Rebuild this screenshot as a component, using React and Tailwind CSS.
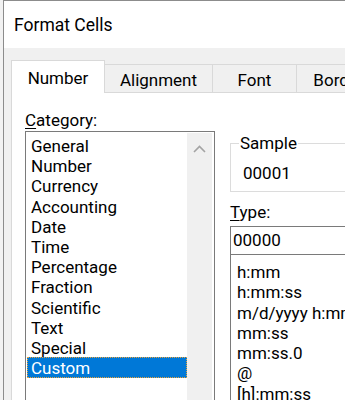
import React from "react";

const categories = [
  "General",
  "Number",
  "Currency",
  "Accounting",
  "Date",
  "Time",
  "Percentage",
  "Fraction",
  "Scientific",
  "Text",
  "Special",
  "Custom",
];

const types = ["h:mm", "h:mm:ss", "m/d/yyyy h:mm", "mm:ss", "mm:ss.0", "@", "[h]:mm:ss"];

const tabs = [
  { name: "Alignment", w: "w-[108px]" },
  { name: "Font", w: "w-[84px]" },
  { name: "Border", w: "w-[84px]" },
];

const App = () => {
  return (
    <div
      className="w-[345px] h-[400px] overflow-hidden bg-[#f2f2f2] text-black"
      style={{ fontFamily: 'Roboto, "Noto Sans", sans-serif' }}
    >
      <div className="ml-[3px] w-[520px] h-[400px] border-l border-t border-[#8c8c8c] flex flex-col overflow-hidden">
        {/* title bar */}
        <div className="shrink-0 h-[47px] bg-white flex items-center pl-[10px] pt-[2px]">
          <span className="text-[17.5px] leading-none">Format Cells</span>
        </div>

        <div className="shrink-0 bg-[#f0f0f0] pl-[7px] pt-[12px] h-[400px]">
          {/* tabs */}
          <div className="flex items-end h-[33px]">
            <div className="relative z-10 w-[94px] h-[33px] bg-white border border-b-0 border-[#d9d9d9] flex items-center justify-center text-[17px] pt-[3px]">
              Number
            </div>
            {tabs.map((t) => (
              <div
                key={t.name}
                className={`${t.w} h-[29px] border border-l-0 border-b-0 border-[#d9d9d9] flex items-center justify-center text-[17px] pt-[3px]`}
              >
                {t.name}
              </div>
            ))}
          </div>

          {/* panel */}
          <div className="-mt-px h-[400px] bg-white border border-[#d9d9d9] pl-[13px] pt-[17px] flex gap-[15px]">
            <div className="w-[190px] shrink-0">
              <div className="text-[17px] leading-[20px] mb-px">
                <span className="underline underline-offset-2">C</span>ategory:
              </div>
              <div className="h-[300px] border border-[#7a7a7a] p-px flex">
                <div className="flex-1 pt-[2px]">
                  {categories.map((c) => (
                    <div
                      key={c}
                      className={
                        c === "Custom"
                          ? "h-[21px] leading-[17px] pt-[2px] pl-[3px] text-[17px] bg-[#0078d7] text-white border border-dotted border-[#e8a33a]"
                          : "h-[20.2px] leading-[18px] pt-[2px] pl-[4px] text-[17px]"
                      }
                    >
                      {c}
                    </div>
                  ))}
                </div>
                <div className="w-[25px] bg-[#f0f0f0] flex justify-center pt-[12px] mr-px">
                  <svg width="13" height="8" viewBox="0 0 13 8">
                    <path d="M1 7 L6.5 1.5 L12 7" fill="none" stroke="#a3a3a3" strokeWidth="1.6" />
                  </svg>
                </div>
              </div>
            </div>

            <div className="w-[200px] shrink-0 pt-[24px]">
              <fieldset className="border border-[#dcdcdc] h-[58px] pl-[8px]">
                <legend className="text-[17px] leading-[18px] px-px">Sample</legend>
                <div className="text-[17px] leading-[20px] pl-[4px] pt-[11px]">00001</div>
              </fieldset>
              <div className="text-[17px] leading-[20px] mt-[10px] mb-[4px]">
                <span className="underline underline-offset-2">T</span>ype:
              </div>
              <div className="h-[29px] border border-[#7a7a7a] pl-[2px] text-[17px] leading-[27px]">
                00000
              </div>
              <div className="h-[200px] border border-t-0 border-[#7a7a7a] pl-[6px] pt-[7px]">
                {types.map((t) => (
                  <div key={t} className="h-[20.3px] leading-[20px] text-[17px] whitespace-nowrap">
                    {t}
                  </div>
                ))}
              </div>
            </div>
          </div>
        </div>
      </div>
    </div>
  );
};

export default App;
